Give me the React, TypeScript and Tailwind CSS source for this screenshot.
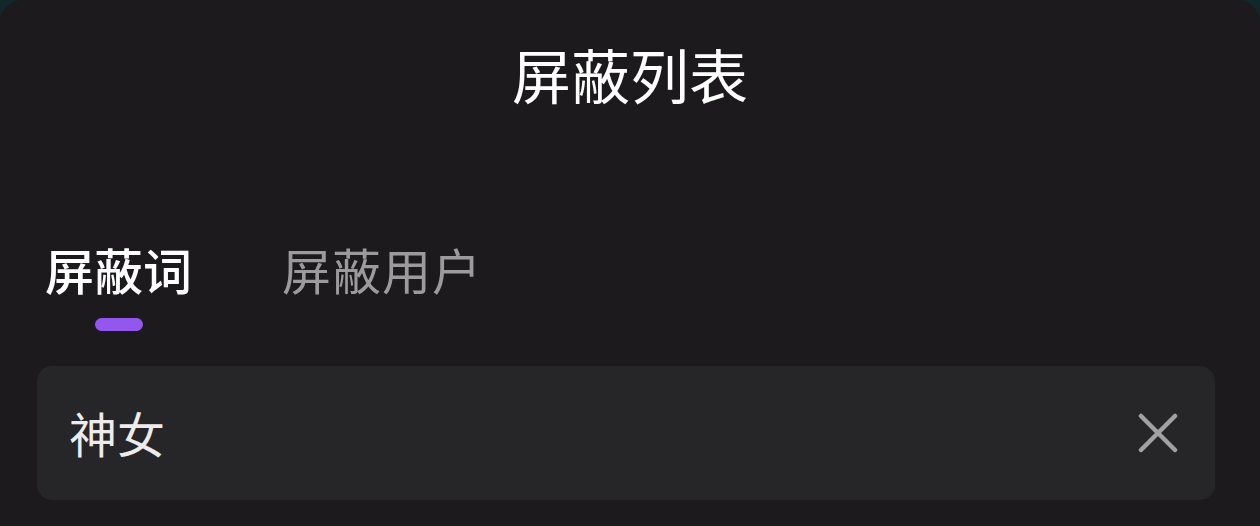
import { useState } from 'react';

const tabs = ['屏蔽词', '屏蔽用户'];

export default function App() {
  const [active, setActive] = useState(0);
  const [words, setWords] = useState(['神女']);

  return (
    <div
      className="w-[1260px] h-[526px] bg-[#12272b] overflow-hidden"
      style={{ fontFamily: '"Noto Sans CJK SC", "Noto Sans", sans-serif' }}
    >
      <div className="h-full bg-[#1c1a1c] rounded-t-[22px] flex flex-col">
        {/* Header */}
        <h1 className="h-[150px] pt-[38px] text-center text-[59px] leading-[72px] text-white font-normal">
          屏蔽列表
        </h1>

        {/* Tabs */}
        <div className="flex gap-[90px] pl-[45px] pt-[87px]">
          {tabs.map((tab, i) => (
            <button
              key={tab}
              onClick={() => setActive(i)}
              className="flex flex-col items-center"
            >
              <span
                className={`text-[49px] leading-[64px] ${
                  i === active ? 'text-white font-medium' : 'text-[#9b9b9b] font-normal tracking-[1px]'
                }`}
              >
                {tab}
              </span>
              <span
                className={`mt-[17px] w-[48px] h-[13px] rounded-full ${
                  i === active ? 'bg-[#9357f0]' : 'bg-transparent'
                }`}
              />
            </button>
          ))}
        </div>

        {/* List */}
        <div className="px-[37px] pr-[45px] pt-[35px] flex flex-col gap-4">
          {words.map((w) => (
            <div
              key={w}
              className="h-[134px] rounded-[15px] bg-[#262527] flex items-center justify-between pl-[32px] pr-[34px]"
            >
              <span className="text-[48px] leading-none text-[#ececec] -mt-[2px]">{w}</span>
              <button
                onClick={() => setWords(words.filter((x) => x !== w))}
                className="w-[46px] h-[46px] flex items-center justify-center"
              >
                <svg width="40" height="40" viewBox="0 0 40 40" fill="none">
                  <path
                    d="M3 3 L37 37 M37 3 L3 37"
                    stroke="#a1a1a1"
                    strokeWidth="4.5"
                    strokeLinecap="round"
                  />
                </svg>
              </button>
            </div>
          ))}
        </div>
      </div>
    </div>
  );
}
